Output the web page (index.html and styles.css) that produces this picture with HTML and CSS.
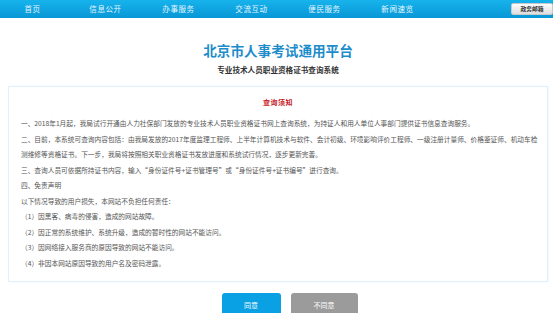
FILE: index.html
```html
<!DOCTYPE html>
<html lang="zh-CN">
<head>
<meta charset="UTF-8" />
<meta name="viewport" content="width=device-width, initial-scale=1" />
<title>北京市人事考试通用平台</title>
<link rel="stylesheet" href="styles.css">
</head>
<body>

<div class="topnav">
  <ul class="nav-list">
    <li>首页</li>
    <li>信息公开</li>
    <li>办事服务</li>
    <li>交流互动</li>
    <li>便民服务</li>
    <li>新闻速览</li>
  </ul>
  <a class="mailbox" href="#">政务邮箱</a>
</div>

<div class="header">
  <h1>北京市人事考试通用平台</h1>
  <h2>专业技术人员职业资格证书查询系统</h2>
</div>

<div class="notice">
  <h3>查询须知</h3>
  <p>一、2018年1月起，我局试行开通由人力社保部门发放的专业技术人员职业资格证书网上查询系统，为持证人和用人单位人事部门提供证书信息查询服务。</p>
  <p>二、目前，本系统可查询内容包括：由我局发放的2017年度监理工程师、上半年计算机技术与软件、会计初级、环境影响评价工程师、一级注册计量师、价格鉴证师、机动车检测维修等资格证书。下一步，我局将按照相关职业资格证书发放进度和系统试行情况，逐步更新完善。</p>
  <p>三、查询人员可依据所持证书内容，输入“身份证件号+证书管理号”或“身份证件号+证书编号”进行查询。</p>
  <p>四、免责声明</p>
  <p>以下情况导致的用户损失，本网站不负担任何责任：</p>
  <p>（1）因黑客、病毒的侵害，造成的网站故障。</p>
  <p>（2）因正常的系统维护、系统升级，造成的暂时性的网站不能访问。</p>
  <p>（3）因网络接入服务商的原因导致的网站不能访问。</p>
  <p>（4）非因本网站原因导致的用户名及密码泄露。</p>
</div>

<div class="actions">
  <button class="btn btn-agree">同意</button>
  <button class="btn btn-disagree">不同意</button>
</div>

</body>
</html>
```

FILE: styles.css
```css
html, body { margin: 0; padding: 0; background: #fff; overflow: hidden; }
body { font-family: "Noto Sans CJK SC", "Microsoft YaHei", sans-serif; color: #555; }

.topnav { display: flex; align-items: center; height: 18px; background: linear-gradient(#17b3ec, #0897d6); }
.nav-list { display: flex; flex: 1; list-style: none; margin: 0 0 0 -4px; padding: 0; }
.nav-list li { width: 73px; text-align: center; font-size: 7.5px; letter-spacing: 0.6px; line-height: 18px; color: #e2f5ff; }
.mailbox { box-sizing: border-box; width: 42px; height: 12px; line-height: 10px; text-align: center; font-size: 5.8px; font-weight: bold; color: #333; text-decoration: none; border: 1px solid #c9c9c9; border-radius: 2px; background: linear-gradient(#fdfdfd, #dedede); }

.header { text-align: center; margin: 24px 5px 0 8px; }
.header h1 { margin: 0; font-size: 13.6px; line-height: 16px; font-weight: bold; color: #1d8ccb; }
.header h2 { margin: 7px 0 0; font-size: 7.6px; line-height: 10px; font-weight: bold; color: #333; }

.notice { margin: 11px 5px 0 8px; padding: 8px 5px 10px 12px; border: 1px solid #e2f0fa; box-shadow: 1px 0 2px #eef7fd; }
.notice h3 { margin: 0 0 7px; padding-right: 7px; text-align: center; font-size: 7px; line-height: 14px; font-weight: bold; color: #c8201f; letter-spacing: 0.5px; }
.notice p { margin: 0; font-size: 6.7px; line-height: 15.5px; color: #555; }

.actions { display: flex; justify-content: center; gap: 10px; margin-top: 11px; padding-left: 26px; }
.btn { height: 24px; border: none; border-radius: 3px; color: #fff; font-family: inherit; font-size: 7px; cursor: pointer; }
.btn-agree { width: 59px; background: #0aa1e4; }
.btn-disagree { width: 67px; background: #9b9b9b; }
```
